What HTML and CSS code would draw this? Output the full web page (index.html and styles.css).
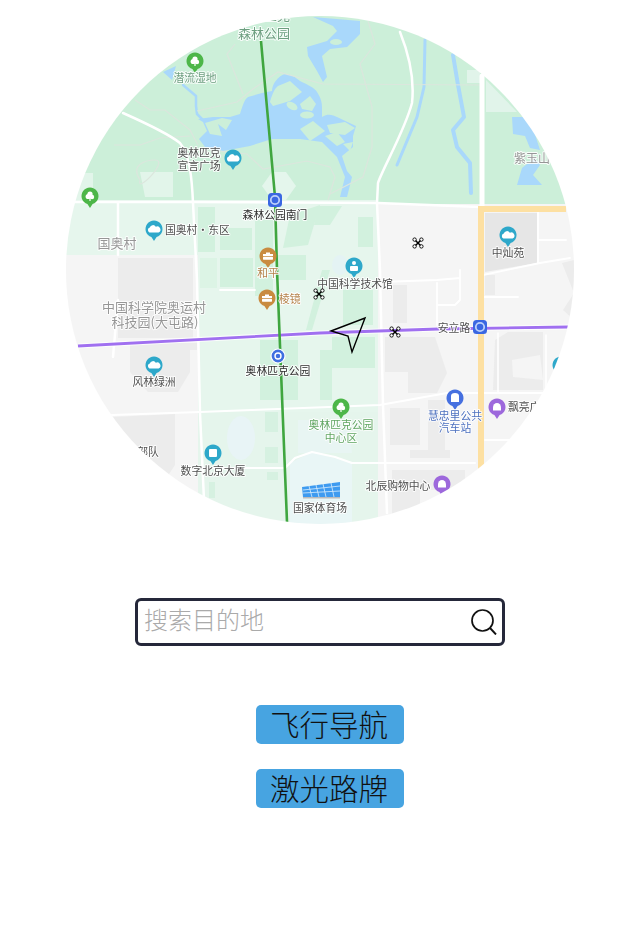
FILE: index.html
```html
<!DOCTYPE html>
<html lang="zh-CN">
<head>
<meta charset="utf-8">
<title>飞行导航</title>
<link rel="stylesheet" href="styles.css">
</head>
<body>
<main class="page">
  <div class="map">
    <svg class="map-svg" viewBox="66 16 508 508" width="508" height="508" aria-label="地图">
      <defs>
        <symbol id="pin" viewBox="-10 -10 20 24" overflow="visible">
          <path d="M-2.6 8.1 L0 12 L2.6 8.1 A8.5 8.5 0 1 0 -2.6 8.1Z" fill="currentColor"/>
        </symbol>
        <g id="drone">
          <path d="M-3 -3 L3 3 M3 -3 L-3 3" stroke="#000" stroke-width="1.5" fill="none"/>
          <circle cx="-3.4" cy="-3.4" r="1.7" fill="#fff" stroke="#000" stroke-width=".9"/>
          <circle cx="3.4" cy="-3.4" r="1.7" fill="#fff" stroke="#000" stroke-width=".9"/>
          <circle cx="-3.4" cy="3.4" r="1.7" fill="#fff" stroke="#000" stroke-width=".9"/>
          <circle cx="3.4" cy="3.4" r="1.7" fill="#fff" stroke="#000" stroke-width=".9"/>
        </g>
        <g id="tree" fill="#fff">
          <circle cx="-1.8" cy="0.5" r="2.6"/>
          <circle cx="2" cy="1" r="2.2"/>
          <circle cx="0" cy="-2" r="2.6"/>
          <rect x="-0.6" y="2" width="1.2" height="3"/>
        </g>
        <g id="cloud" fill="#fff">
          <path d="M-4.600 3.500 a2.700 2.700 0 0 1 0.400 -5 a3.300 3.300 0 0 1 6 -0.800 a2.900 2.900 0 0 1 2.800 5.800Z"/>
        </g>
        <g id="case" fill="#fff">
          <path d="M-2 -3.600 h4 v1.500 h3 v2 h-10 v-2 h3Z"/>
          <rect x="-5" y="0.700" width="10" height="3" rx="0.600"/>
        </g>
        <g id="bell" fill="#fff">
          <path d="M-4 3.500 v-3 a4 4.500 0 0 1 8 0 v3Z"/>
        </g>
      </defs>
      <g class="art">
        <rect x="66" y="16" width="508" height="508" fill="#ccefd9"/>
        <!-- land blocks -->
        <rect x="66" y="200" width="312" height="330" fill="#e6f6ed"/>
        <rect x="66" y="255" width="132" height="280" fill="#f5f5f5"/>
        <rect x="378" y="204" width="200" height="330" fill="#f5f5f5"/>
        <path d="M70 173 H93 V200 H70Z M140 172 H173 V197 H145Z" fill="#e2f5ea"/>
        <path d="M262 186 L272 172 H286 L296 186 L286 200 H272Z" fill="#e4f6ec"/>
        <path d="M486 80 L517 112 H486Z" fill="#e1f4ea"/>
        <rect x="467" y="70" width="13" height="13" fill="#e1f4ea"/>
        <!-- green strips -->
        <g fill="#d2f1de">
          <rect x="198" y="207" width="17" height="45"/>
          <rect x="220" y="228" width="32" height="22"/>
          <rect x="220" y="258" width="33" height="29"/>
          <rect x="200" y="258" width="17" height="30" opacity=".5"/>
          <rect x="255" y="220" width="18" height="76"/>
          <rect x="278" y="255" width="28" height="25"/>
          <path d="M290 215 L320 205 L308 245 L283 248Z"/>
          <path d="M318 206 H342 L330 225 H314Z"/>
          <rect x="358" y="217" width="15" height="30"/>
          <rect x="343" y="290" width="30" height="35"/>
          <rect x="332" y="337" width="43" height="31"/>
          <path d="M322 270 L330 270 L312 330 L306 330Z"/>
          <rect x="260" y="340" width="38" height="60"/>
          <rect x="320" y="350" width="12" height="50"/>
          <rect x="265" y="412" width="13" height="20"/>
          <rect x="265" y="447" width="13" height="16"/>
          <rect x="267" y="472" width="11" height="8"/>
          <rect x="209" y="482" width="6" height="16"/>
        </g>
        <path d="M198 412 H378 V530 H198Z" fill="#e2f5ea" opacity=".25"/>
        <ellipse cx="241" cy="438" rx="14" ry="22" fill="#e8f4f6"/>
        <ellipse cx="340" cy="265" rx="8" ry="10" fill="#e4f3f4"/>
        <path d="M298 420 H348 L352 453 H298Z" fill="#e8f5f3"/>
        <path d="M290 463 L312 452 L352 463 V525 H290Z" fill="#e9f6f6"/>
        <!-- greys -->
        <g fill="#ececec">
          <rect x="118" y="258" width="75" height="80"/>
          <path d="M130 343 H197 V350 H190 V372 L178 392 H148 L130 372Z"/>
          <path d="M112 417 L175 414 V465 L165 480 L150 525 H112Z"/>
          <rect x="393" y="285" width="14" height="38"/>
          <path d="M385 337 H435 L447 373 L437 393 H385Z"/>
          <path d="M390 408 H420 V445 H390Z M428 400 H445 V450 H428Z"/>
          <rect x="410" y="450" width="40" height="8"/>
          <path d="M392 470 H465 V490 H420 V515 H392Z"/>
          <path d="M495 340 L508 332 H543 V390 H493Z"/>
          <path d="M485 213 H537 V263 L485 272Z" fill="#e6e6e6"/>
          <rect x="485" y="275" width="10" height="20"/>
          <path d="M562 263 L574 293 L563 310 L574 320 V260Z"/>
        </g>
        <path d="M385 372 H408 V393 H385Z" fill="#f5f5f5"/>
        <path d="M512 360 L540 355 L543 380 L513 377Z" fill="#f5f5f5"/>
        <!-- water -->
        <path fill="#a9d8fb" d="M199 139 L207 131 L203 122 L198 119 L213 117 L230 117 L240 114 C243 104 245 99 248 97 L262 93 L272 91 C272 84 278 76 285 74 C292 74 296 78 300 81 C308 85 315 88 317 92 C321 98 322 103 322 107 L322 117 C328 113 333 115 337 117 L356 126 L353 136 L353 147 L342 156 L347 171 L352 177 L347 197 L340 197 L345 177 L337 157 L322 142 L300 139 L272 139 L250 146 L223 151 L205 147Z"/>
        <path fill="#a9d8fb" d="M313 17 L360 21 L360 34 L347 47 L330 49 L322 56 L327 77 L323 82 L317 71 L308 56 L307 47 L327 41 L337 31 L333 26Z"/>
        <ellipse cx="336" cy="42" rx="6" ry="3" fill="#ccefd9"/>
        <g fill="#ccefd9">
          <path d="M270 102 C272 94 275 88 278 86 L290 81 L302 92 L290 101 L273 106Z"/>
          <path d="M300 104 L310 96 L316 104 L312 111 L302 109Z"/>
          <ellipse cx="292" cy="106" rx="6" ry="3.500" transform="rotate(30 292 106)"/>
          <ellipse cx="307" cy="115" rx="7" ry="3.500"/>
          <path d="M300 129 L313 121 L325 131 L310 141Z"/>
          <path d="M327 125 L345 122 L355 128 L345 135 L330 133Z"/>
          <path d="M325 136 L337 132 L345 142 L337 146Z"/>
          <path d="M343 144 L353 142 L350 151Z"/>
          <path d="M205 123 L222 118 L232 120 L226 130 L218 124 L222 136 L210 134Z"/>
        </g>
        <g fill="none" stroke="#a9d8fb" stroke-linecap="round" stroke-linejoin="round">
          <path d="M183 85 L196 96 L196 106 L197 114 L203 120" stroke-width="2.500"/>
          <path d="M425 40 L424 87 L417 117 L397 165" stroke-width="3"/>
          <path d="M453 55 L458 85 L464 117 L453 130 L457 147 L470 163 L471 193" stroke-width="4"/>
        </g>
        <path d="M163 72 L176 66 L172 80 Z" fill="#a9d8fb"/>
        <path d="M512 117 L523 117 L532 125 L540 150 L530 148 L525 136 L513 134Z M517 185 L522 168 L535 158 L540 165 L533 175 L542 185Z" fill="#a9d8fb"/>
        <!-- paths -->
        <g fill="none" stroke="#dbe6dd" stroke-width="1.200">
          <path d="M135 100 L150 110 L165 110 L190 130 L198 145"/>
          <path d="M114 145 L140 145 L160 138 L190 136"/>
          <path d="M197 111 L237 102 L253 89 L278 72 L323 84 L480 85"/>
          <path d="M235 44 L227 54 L243 94"/>
          <path d="M368 21 L375 44 L360 64 L372 107 L372 147 L363 177 L330 194"/>
          <path d="M140 180 C130 165 145 160 155 160 C170 160 135 195 140 180Z"/>
          <path d="M200 149 L247 154 L263 169 L307 161 L330 167 L335 177 L328 200"/>
        </g>
        <!-- roads -->
        <g fill="none" stroke="#fff" stroke-linecap="round" stroke-linejoin="round">
          <path d="M123 113 C150 125 170 135 180 143 C190 155 192 180 193 203 L197 280 L200 413 L204 500" stroke-width="2.500"/>
          <path d="M66 202 H193 L378 203 L480 207" stroke-width="2.500"/>
          <path d="M118 203 V255 M118 300 L113 357" stroke-width="2.500"/>
          <path d="M400 32 C412 62 414 85 412 103 C405 130 382 170 378 183 L377 203 L380 270 L383 405 L387 513" stroke-width="2.500"/>
          <path d="M482 76 V207" stroke-width="5"/>
          <path d="M112 415 L200 412 L380 405 L447 393 H553" stroke-width="2.200"/>
          <path d="M200 468 H285 L295 458 L312 452 L335 457 L352 463 H475" stroke-width="2.200"/>
          <path d="M220 290 H255 M380 282 L437 280 L460 278 V270 M460 278 V300 L455 305 H437 M437 283 V325 M483 297 H518 M483 275 L540 263 L570 258" stroke-width="1.800"/>
          <path d="M538 210 V263 M538 240 H566" stroke-width="1.800"/>
          <path d="M485 440 H520 M482 470 H500" stroke-width="1.800"/>
          <path d="M498 333 V393 M546 335 V395" stroke-width="1.500"/>
        </g>
        <path d="M480 209 H566 M481 206 V470" fill="none" stroke="#fde0a2" stroke-width="6"/>
        <!-- route lines -->
        <path d="M78 346 L320 333 L438 329 L568 327" fill="none" stroke="#fff" stroke-width="5" opacity=".8"/>
        <path d="M78 346 L320 333 L438 329 L568 327" fill="none" stroke="#a070f0" stroke-width="2.800"/>
        <path d="M261 41 L275 197 L277 270 L287 522" fill="none" stroke="#3fa63f" stroke-width="2.600"/>
        <!-- stadium -->
        <path d="M302 487 L340 482 V497 H303Z" fill="#3e9bf0"/>
        <path d="M303 490 L340 486 M303 493 L340 491 M309 486 L312 497 M316 485 L319 497 M323 484 L326 497 M331 483 L334 497" stroke="#d8eefc" stroke-width=".8"/>
        <rect x="303" y="497" width="37" height="1.500" fill="#bbb"/>
        <!-- pins -->
        <use href="#pin" class="p-green" x="185" y="51" width="20" height="24"/>
        <use href="#pin" class="p-teal" x="223" y="148" width="20" height="24"/>
        <use href="#pin" class="p-green" x="80" y="186" width="20" height="24"/>
        <use href="#pin" class="p-teal" x="144" y="219" width="20" height="24"/>
        <use href="#pin" class="p-orange" x="258" y="246" width="20" height="24"/>
        <use href="#pin" class="p-orange" x="257" y="288" width="20" height="24"/>
        <use href="#pin" class="p-teal" x="344" y="256" width="20" height="24"/>
        <use href="#pin" class="p-teal" x="144" y="355" width="20" height="24"/>
        <use href="#pin" class="p-teal" x="203" y="443" width="20" height="24"/>
        <use href="#pin" class="p-teal" x="498" y="225" width="20" height="24"/>
        <use href="#pin" class="p-green" x="331" y="397" width="20" height="24"/>
        <use href="#pin" class="p-blue" x="445" y="388" width="20" height="24"/>
        <use href="#pin" class="p-purple" x="487" y="397" width="20" height="24"/>
        <use href="#pin" class="p-purple" x="432" y="474" width="20" height="24"/>
        <use href="#pin" class="p-teal" x="551" y="355" width="20" height="24"/>
        <use href="#tree" x="195" y="61"/>
        <use href="#tree" x="90" y="196"/>
        <use href="#tree" x="341" y="407"/>
        <use href="#cloud" x="233" y="158"/>
        <use href="#cloud" x="154" y="229"/>
        <use href="#cloud" x="154" y="365"/>
        <use href="#cloud" x="508" y="235"/>
        <use href="#case" x="268" y="256"/>
        <use href="#case" x="267" y="298"/>
        <use href="#bell" x="497" y="407"/>
        <use href="#bell" x="442" y="484"/>
        <g fill="#fff">
          <rect x="209" y="449" width="8" height="8" rx="1"/>
          <circle cx="354" cy="263" r="2"/>
          <rect x="350" y="266" width="8" height="5" rx="1"/>
          <path d="M451 396 a4 3 0 0 1 8 0 v6 h-8Z"/>
        </g>
        <rect x="268" y="193" width="14" height="14" rx="3.500" fill="#3a67e2"/>
        <circle cx="275" cy="200" r="4.200" fill="none" stroke="#bcd0fa" stroke-width="1.800"/>
        <rect x="473" y="320" width="14" height="14" rx="3.500" fill="#3a67e2"/>
        <circle cx="480" cy="327" r="4.200" fill="none" stroke="#bcd0fa" stroke-width="1.800"/>
        <circle cx="278" cy="356" r="7" fill="#3f6fe0" stroke="#fff" stroke-width="1.200"/>
        <circle cx="278" cy="356" r="3" fill="none" stroke="#fff" stroke-width="1.400"/>
        <!-- labels -->
        <g class="labels">
          <text class="l l-green l-13" x="264" y="20">奥林匹克</text>
          <text class="l l-green l-13" x="264" y="38">森林公园</text>
          <text class="l l-green" x="195" y="82">潜流湿地</text>
          <text class="l l-dark" x="199" y="157">奥林匹克</text>
          <text class="l l-dark" x="199" y="170">宣言广场</text>
          <text class="l l-strong" x="275" y="219">森林公园南门</text>
          <text class="l l-dark l-s" x="165" y="234">国奥村·东区</text>
          <text class="l l-grey l-13" x="117" y="248">国奥村</text>
          <text class="l l-orange" x="268" y="277">和平</text>
          <text class="l l-orange l-s" x="279" y="303">棱镜</text>
          <text class="l l-dark" x="355" y="288">中国科学技术馆</text>
          <text class="l l-grey l-13" x="154" y="312">中国科学院奥运村</text>
          <text class="l l-grey l-13" x="155" y="327">科技园(大屯路)</text>
          <text class="l l-dark" x="454" y="332">安立路</text>
          <text class="l l-strong" x="278" y="375">奥林匹克公园</text>
          <text class="l l-dark" x="154" y="386">风林绿洲</text>
          <text class="l l-green2" x="341" y="429">奥林匹克公园</text>
          <text class="l l-green2" x="341" y="442">中心区</text>
          <text class="l l-blue" x="455" y="420">慧忠里公共</text>
          <text class="l l-blue" x="455" y="432">汽车站</text>
          <text class="l l-dark l-s" x="508" y="411">飘亮广场</text>
          <text class="l l-dark" x="148" y="456">部队</text>
          <text class="l l-dark" x="213" y="475">数字北京大厦</text>
          <text class="l l-dark" x="398" y="490">北辰购物中心</text>
          <text class="l l-dark" x="320" y="512">国家体育场</text>
          <text class="l l-dark" x="508" y="257">中灿苑</text>
          <text class="l l-grey l-12" x="532" y="163">紫玉山</text>
        </g>
      </g>
      <use href="#drone" x="418" y="243"/>
      <use href="#drone" x="319" y="294"/>
      <use href="#drone" x="395" y="332"/>
      <path d="M331 331 L365 318 L352 352 L348 336Z" fill="none" stroke="#000" stroke-width="1.400" stroke-linejoin="miter"/>
    </svg>
  </div>

  <div class="search">
    <span class="search-text">搜索目的地</span>
    <svg class="search-icon" viewBox="0 0 26 26" width="26" height="26" aria-hidden="true">
      <circle cx="11.500" cy="11.500" r="10.500" fill="none" stroke="#111" stroke-width="1.700"/>
      <path d="M19 19 L25 25.500" fill="none" stroke="#111" stroke-width="1.900"/>
    </svg>
  </div>

  <div class="actions">
    <button class="btn" type="button">飞行导航</button>
    <button class="btn" type="button">激光路牌</button>
  </div>
</main>
</body>
</html>
```

FILE: styles.css
```css
* { box-sizing: border-box; }
html, body { margin: 0; padding: 0; background: #fff; }
body { font-family: "Noto Sans CJK SC", "Noto Sans", sans-serif; }

.page {
  display: flex;
  flex-direction: column;
  align-items: center;
  height: 933px;
  padding-top: 16px;
}

.map {
  width: 508px;
  height: 508px;
  border-radius: 50%;
  overflow: hidden;
}
.map-svg { display: block; }
.art { filter: blur(0.6px); }

.p-green { color: #4db649; }
.p-teal { color: #2ea8ca; }
.p-orange { color: #c98b40; }
.p-blue { color: #4670e0; }
.p-purple { color: #9d68dc; }

.l {
  font-size: 10.8px;
  text-anchor: middle;
  paint-order: stroke;
  stroke: rgba(255, 255, 255, 0.85);
  stroke-width: 2px;
  stroke-linejoin: round;
}
.l-s { text-anchor: start; }
.l-13 { font-size: 13px; }
.l-12 { font-size: 12px; }
.l-dark { fill: #4f4f4f; }
.l-strong { fill: #2c2c2c; }
.l-grey { fill: #969696; }
.l-green { fill: #6d9f80; }
.l-green2 { fill: #5fa560; }
.l-orange { fill: #b5824a; }
.l-blue { fill: #4c70bf; }

.search {
  display: flex;
  align-items: center;
  justify-content: space-between;
  width: 370px;
  height: 48px;
  margin-top: 74px;
  padding: 0 5.5px 0 6px;
  border: 3px solid #25283a;
  border-radius: 6px;
}
.search-text {
  padding-bottom: 6px;
  font-size: 24px;
  font-weight: 300;
  line-height: 1;
  color: #aaa;
}
.search-icon { display: block; }

.actions {
  display: flex;
  flex-direction: column;
  gap: 25px;
  margin-top: 59px;
  margin-left: 20px;
}
.btn {
  display: block;
  width: 148px;
  height: 39px;
  padding: 0 2px 3px 0;
  border: 0;
  border-radius: 5px;
  background: #47a4e1;
  color: #111;
  font-family: inherit;
  font-size: 29.5px;
  font-weight: 300;
  line-height: 36px;
  text-align: center;
}
```
